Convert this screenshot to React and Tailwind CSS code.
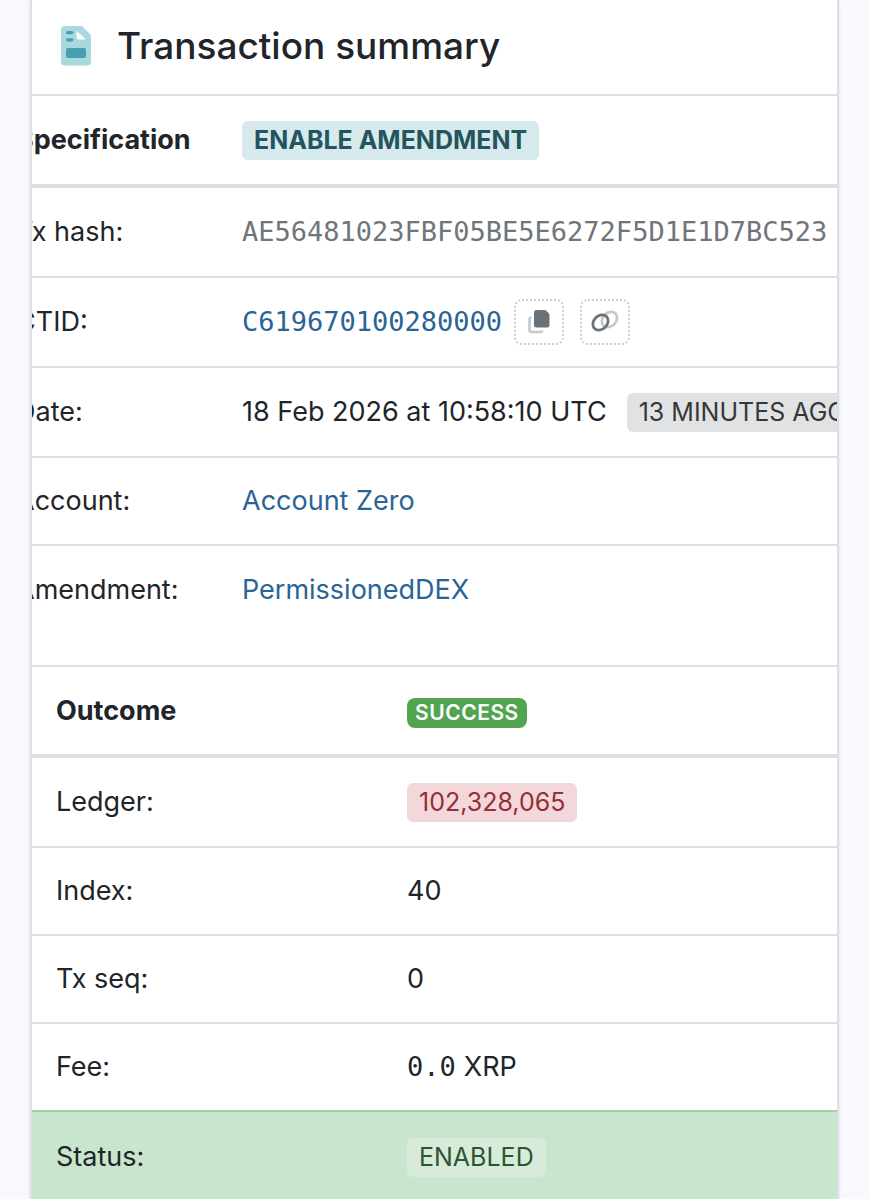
import clsx from 'clsx';

const specification = [
    { label: 'Tx hash:', type: 'hash', value: 'AE56481023FBF05BE5E6272F5D1E1D7BC523' },
    { label: 'CTID:', type: 'ctid', value: 'C619670100280000' },
    { label: 'Date:', type: 'date', value: '18 Feb 2026 at 10:58:10 UTC', ago: '13 MINUTES AGO' },
    { label: 'Account:', type: 'link', value: 'Account Zero' },
    { label: 'Amendment:', type: 'link', value: 'PermissionedDEX' }
];

const outcome = [
    { label: 'Ledger:', type: 'ledger', value: '102,328,065' },
    { label: 'Index:', type: 'text', value: '40' },
    { label: 'Tx seq:', type: 'text', value: '0' },
    { label: 'Fee:', type: 'fee', value: '0.0' },
    { label: 'Status:', type: 'status', value: 'ENABLED' }
];

const mono = "font-['DejaVu_Sans_Mono',monospace]";

function InvoiceIcon() {
    return (
        <svg viewBox="0 0 30 40" className="h-10 w-[30px]" aria-hidden="true">
            <path
                fill="#a9d8df"
                fillRule="evenodd"
                d="M4 0h15.500q1.500 0 2.500 1l7 7q1 1 1 2.500V35.500a4 4 0 0 1-4 4H4a4 4 0 0 1-4-4V4a4 4 0 0 1 4-4zM15.500 5v6.500a2 2 0 0 0 2 2h7.500z"
            />
            <rect x="5" y="5" width="7.500" height="3.200" rx="1.600" fill="#479fb0" />
            <rect x="5" y="12.200" width="7.500" height="3.200" rx="1.600" fill="#479fb0" />
            <rect x="5" y="22" width="20" height="10" rx="2" fill="#479fb0" />
        </svg>
    );
}

function CopyIcon() {
    return (
        <svg viewBox="0 0 22 24" className="h-6 w-[22px]" aria-hidden="true">
            <path d="M3.500 7.500q-2 0-2 2v10.500q0 2 2 2h9q1.500 0 1.500-1.500" fill="none" stroke="#c6c8cb" strokeWidth="2.600" />
            <path d="M8.500 0h8q1 0 2 1l2.200 2.200q.8.800.8 2V15a2.500 2.500 0 0 1-2.500 2.500H8.500A2.500 2.500 0 0 1 6 15V2.500A2.500 2.500 0 0 1 8.500 0z" fill="#6a727a" />
        </svg>
    );
}

function ChainIcon() {
    return (
        <svg viewBox="0 0 28 24" className="h-6 w-7" fill="none" strokeWidth="2.800" aria-hidden="true">
            <ellipse cx="18.500" cy="9.500" rx="8.500" ry="6.700" transform="rotate(-45 18.500 9.500)" stroke="#c6c8cb" />
            <ellipse cx="9.500" cy="12.500" rx="8.500" ry="6.700" transform="rotate(-45 9.500 12.500)" stroke="#6a727a" />
        </svg>
    );
}

function IconButton({ label, children }) {
    return (
        <button
            type="button"
            aria-label={label}
            className="flex h-[46px] w-[50px] items-center justify-center rounded-lg border-2 border-dotted border-[#cfd0d2] bg-white"
        >
            {children}
        </button>
    );
}

function Badge({ className, children }) {
    return (
        <span className={clsx('inline-flex h-[39px] items-center rounded-md px-3 text-[25px]', className)}>
            {children}
        </span>
    );
}

function Value({ row }) {
    switch (row.type) {
        case 'hash':
            return <span className={clsx(mono, 'text-[#6f757b]')}>{row.value}</span>;
        case 'ctid':
            return (
                <div className="flex items-center gap-3">
                    <a href="#ctid" className={clsx(mono, 'text-[#2a6496]')}>{row.value}</a>
                    <div className="flex gap-4">
                        <IconButton label="Copy CTID"><CopyIcon /></IconButton>
                        <IconButton label="Copy link"><ChainIcon /></IconButton>
                    </div>
                </div>
            );
        case 'date':
            return (
                <div className="flex items-center gap-5">
                    <span>{row.value}</span>
                    <Badge className="bg-[#e1e2e3] text-[#35383b]">{row.ago}</Badge>
                </div>
            );
        case 'link':
            return <a href="#details" className="text-[#2a6496]">{row.value}</a>;
        case 'ledger':
            return <Badge className="bg-[#f3d7da] text-[#943036]">{row.value}</Badge>;
        case 'fee':
            return (
                <span className="flex items-baseline gap-2">
                    <span className={mono}>{row.value}</span>
                    <span>XRP</span>
                </span>
            );
        case 'status':
            return <Badge className="bg-[#d8ebdb] text-[#2a572e]">{row.value}</Badge>;
        default:
            return row.value;
    }
}

function Row({ row, height, last }) {
    const cell = clsx(
        height,
        'p-0',
        !last && 'border-b-2',
        row.label === 'Fee:' ? 'border-[#a3cfa9]' : 'border-[#dddfe5]'
    );
    return (
        <tr className={clsx(row.type === 'status' && 'bg-[#c9e5ce]')}>
            <th scope="row" className={clsx(cell, 'pl-6 text-left font-normal')}>{row.label}</th>
            <td className={cell}><Value row={row} /></td>
        </tr>
    );
}

export default function App() {
    return (
        <main className="min-h-screen overflow-hidden bg-[#f8f9fe] px-[30px] font-['Inter',sans-serif] text-[27px] leading-10 text-[#212529]">
            <section className="overflow-hidden border-x-2 border-[#dedfe3] bg-white shadow-sm">
                <header className="flex h-24 items-center gap-[26px] border-b-2 border-[#dddfe5] pb-0.5 pl-[29px]">
                    <InvoiceIcon />
                    <h1 className="text-[37px] font-medium">Transaction summary</h1>
                </header>

                {/* Specification, scrolled a little to the right */}
                <div className="overflow-hidden border-b-2 border-[#dddfe5]">
                    <table className="-ml-10 w-[900px] table-fixed border-separate border-spacing-0 whitespace-nowrap">
                        <colgroup>
                            <col className="w-[250px]" />
                            <col />
                        </colgroup>
                        <thead>
                            <tr>
                                <th scope="col" className="h-[92px] border-b-4 border-[#dddfe5] p-0 pl-6 text-left font-bold">Specification</th>
                                <th scope="col" className="h-[92px] border-b-4 border-[#dddfe5] p-0 text-left">
                                    <Badge className="bg-[#d6eaee] font-bold text-[#24545d]">ENABLE AMENDMENT</Badge>
                                </th>
                            </tr>
                        </thead>
                        <tbody>
                            {specification.map((row, index) => (
                                <Row
                                    key={row.label}
                                    row={row}
                                    height={index < 3 ? 'h-[90px]' : 'h-[88px]'}
                                    last={index === specification.length - 1}
                                />
                            ))}
                        </tbody>
                    </table>
                    <div className="h-[31px]" />
                </div>

                {/* Outcome */}
                <table className="w-full table-fixed border-separate border-spacing-0">
                    <colgroup>
                        <col className="w-[375px]" />
                        <col />
                    </colgroup>
                    <thead>
                        <tr>
                            <th scope="col" className="h-[91px] border-b-4 border-[#dddfe5] p-0 pl-6 text-left font-bold">Outcome</th>
                            <th scope="col" className="h-[91px] border-b-4 border-[#dddfe5] p-0 pt-1 text-left">
                                <span className="flex h-[30px] w-fit items-center rounded-lg bg-[#53a451] px-2 text-[21px] font-semibold tracking-wide text-white">
                                    SUCCESS
                                </span>
                            </th>
                        </tr>
                    </thead>
                    <tbody>
                        {outcome.map((row, index) => (
                            <Row
                                key={row.label}
                                row={row}
                                height={index === 0 || row.type === 'status' ? 'h-[90px]' : 'h-[88px]'}
                                last={index === outcome.length - 1}
                            />
                        ))}
                    </tbody>
                </table>
            </section>
        </main>
    );
}
